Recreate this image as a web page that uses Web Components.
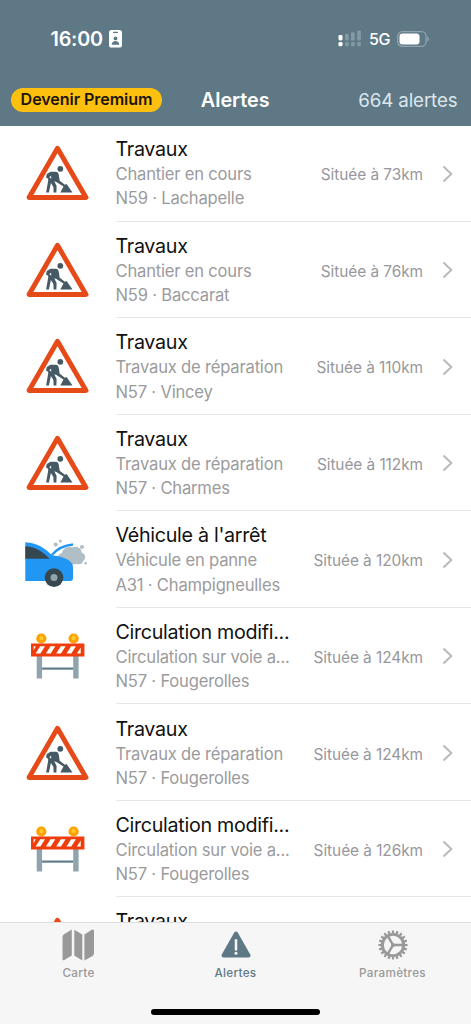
<!DOCTYPE html>
<html lang="fr">
<head>
<meta charset="utf-8">
<title>Alertes</title>
<style>
html,body{margin:0;height:100%;background:#fff;overflow:hidden}
body{font-family:Inter,"Liberation Sans",sans-serif}
</style>
</head>
<body>
<alert-app></alert-app>
<script>
const define=(name,html)=>customElements.define(name,class extends HTMLElement{
  constructor(){super();this.attachShadow({mode:'open'});}
  connectedCallback(){this.shadowRoot.innerHTML=typeof html==='function'?html(this):html;}
});

define('status-bar',`<style>
:host{display:flex;height:74px;box-sizing:border-box;padding:3px 41px 0 50.5px;align-items:center;color:#fff}
.time{font-weight:600;font-size:19.8px;letter-spacing:-.2px;width:52.5px;margin-right:5.5px;white-space:nowrap}
.net{font-weight:500;font-size:16px;letter-spacing:-.4px;margin:1px 7px 0 7px;white-space:nowrap}
.sp{flex:1}svg{display:block}
</style>
<span class="time">16:00</span>
<svg width="13" height="18" viewBox="0 0 13 18"><rect width="13" height="17.5" rx="2.6" fill="#fff"/><g fill="#5e7886"><rect x="4" y="1.7" width="5" height="1.3" rx=".6"/><circle cx="6.5" cy="8.4" r="1.9"/><path d="M2.7 14.8c0-5 7.6-5 7.6 0z"/></g></svg>
<span class="sp"></span>
<svg width="24" height="17" viewBox="0 0 24 17"><g fill="#fff"><rect x=".5" y="5" width="4" height="5.4" rx="1.3"/><rect x=".5" y="12" width="4" height="4.3" rx="1.3"/></g><g fill="#839aa5"><rect x="7" y="4" width="3.7" height="6.4" rx="1"/><rect x="13" y="2.3" width="3.7" height="8.1" rx="1"/><rect x="19.2" y=".4" width="3.7" height="10" rx="1"/><rect x="7" y="12" width="3.7" height="4.2" rx="1.2"/><rect x="13" y="12" width="3.7" height="4.2" rx="1.2"/><rect x="19.2" y="12" width="3.7" height="4.2" rx="1.2"/></g></svg>
<span class="net">5G</span>
<svg width="33" height="16" viewBox="0 0 33 16"><rect x=".7" y=".7" width="28.4" height="14.6" rx="4.6" fill="none" stroke="#91a4ae" stroke-width="1.3"/><rect x="2.5" y="2.5" width="20" height="11" rx="3" fill="#fff"/><path d="M30.4 5.5c2.2.8 2.2 4.2 0 5z" fill="#91a4ae"/></svg>`);

define('nav-bar',`<style>
:host{display:grid;grid-template-columns:1fr auto 1fr;height:52px;align-items:center;padding:0 13.5px 0 11px;box-sizing:border-box}
.pill{justify-self:start;width:151px;height:23.5px;border-radius:12px;background:#fec00f;color:#1c1608;font-weight:600;font-size:16.1px;letter-spacing:-.08px;line-height:23.5px;text-align:center;white-space:nowrap}
.title{color:#fff;font-weight:600;font-size:19.8px;letter-spacing:0;padding-left:2px}
.count{justify-self:end;color:#dde7ed;font-size:18.7px;letter-spacing:-.1px;white-space:nowrap}
</style><span class="pill">Devenir Premium</span><span class="title"><slot></slot></span><span class="count">664 alertes</span>`);

const art={
works:`<path d="M32.5 7.3 61 56.5H4Z" fill="#fff" stroke="#e64a19" stroke-width="4.9" stroke-linejoin="round"/>
<g fill="#455a64"><circle cx="35.3" cy="27.8" r="2.9"/><path d="M25.5 30.8h5.3c1.8 0 2.8 1.4 3 3.1l.9 5.8 5.2 4.1 1.7-.9 5.9 8.6H35.3l3.2-6-7.1-4.5-2.1-.8 2.3 4.9-.2 6.4h-2.8l-.2-5.4-2.5-4.2-2 9.6h-2.8l2.1-12.1-.1-1.6-2.1-1.4.8-3.5Z"/></g><path d="m24.4 36.3 1.8-1.8-.1 3.2Z" fill="#fff"/>`,
car:`<path d="M33 34c-2-4 1-7 4-8 1-5 6-7 10-5.5 5-2 10 1 9.5 5 4 1 5 6 1.8 8.2-1 4-5 4-7 3.3-5 1-14 2-18.3-3Z" fill="#b0bec5"/><g fill="#b0bec5"><circle cx="30.7" cy="17.6" r="2.1"/><circle cx="35.4" cy="14" r="1.5"/><circle cx="57" cy="20" r="2.1"/><circle cx="60.6" cy="36.3" r="1.3"/></g>
<path d="M.3 15.2C12 16 20 21 27 28.3c9 1.2 16.5 3.3 20 8.2.8 1.200 1 3 1 5V51.5q0 2.4-2.4 2.4H.3Z" fill="#2196f3"/><path d="M.3 19.3C11 20 18 25 24.5 31.7H.3Z" fill="#37474f"/><path d="M26.8 28C32 22 39 18.3 48 17.5" fill="none" stroke="#2196f3" stroke-width="2.3"/><circle cx="29" cy="50.6" r="9.3" fill="#37474f"/><circle cx="29" cy="50.6" r="3.5" fill="#90a4ae"/>`,
barrier:`<path d="M11.7 31h5.4v23.4h-5.4zM48.2 31h5.4v23.4h-5.4z" fill="#90a4ae"/><path d="M17.1 43.5h31.1v2.2H17.1z" fill="#607d8b"/>
<g fill="#ffa000"><circle cx="16.3" cy="14.5" r="5.1"/><circle cx="48.6" cy="14.5" r="5.1"/></g><g fill="#ffca28"><circle cx="16.3" cy="14" r="2.2"/><circle cx="48.6" cy="14" r="2.2"/></g>
<path d="M6 19.4h53.4v13H6z" fill="#f03d0c"/><path d="M8.6 22.200h2.200L8.600 26.200zM15.200 22.200h4.800l-4.600 7.300h-4.800zM25.500 22.200h4.800l-4.600 7.300h-4.800zM35.800 22.200h4.800l-4.600 7.300h-4.800zM46.100 22.200h4.800l-4.600 7.300h-4.800zM55.700 23.500v6h-3.800z" fill="#fff"/>`};
define('alert-icon',h=>`<style>:host{display:block;width:64px;height:64px}svg{display:block}</style><svg width="64" height="64" viewBox="0 0 64 64">${art[h.getAttribute('kind')]}</svg>`);

define('alert-row',h=>`<style>
:host{display:flex;height:96.55px;flex:none;align-items:center;box-sizing:border-box;padding-left:25px}
.body{margin-left:26.5px;flex:1;height:100%;box-sizing:border-box;border-bottom:1px solid #e7e7e9;display:flex;align-items:center;padding-right:18px;min-width:0}
.text{width:190px;flex:none;white-space:nowrap;color:#9b9b9d;font-size:16.6px;line-height:24.2px;letter-spacing:-.2px;padding-top:2.4px}
.t{color:#111;font-size:19.7px;line-height:25px;letter-spacing:-.3px}
.d{margin-left:auto;color:#97979c;font-size:15.4px;letter-spacing:-.05px;white-space:nowrap;padding-top:4px}
svg{margin:1.5px 0 0 19px;flex:none}
</style><alert-icon kind="${h.getAttribute('kind')}"></alert-icon>
<div class="body"><div class="text"><div class="t"><slot name="title"></slot></div><div><slot name="detail"></slot></div><div><slot name="place"></slot></div></div>
<span class="d"><slot name="distance"></slot></span>
<svg width="11" height="18" viewBox="0 0 11 18"><path d="m1.5 1.500 7.8 7.500-7.8 7.500" fill="none" stroke="#b9b9bc" stroke-width="2"/></svg></div>`);

const gear=(()=>{let s='';for(let i=0;i<20;i++)s+=`<path d="M-1.300-11.500-1-14.600H1L1.300-11.500Z" transform="rotate(${i*18})"/>`;return s})();
const tabs={
map:`<svg width="33" height="32" viewBox="0 0 33 32"><path d="M2 5.2 9.8.5v26L2.3 31Q.5 31.8.5 30V8q0-1.9 1.5-2.8ZM12.300.7l8 4.800v26l-8-5ZM22.400 5.500 29.800.8q2.200-1 2.200 1.200v22.300q0 1.700-1.400 2.600L22.400 31.500Z" fill="#999"/></svg>`,
warn:`<svg width="30" height="32" viewBox="0 0 30 32"><path d="M15 4.5 27.5 26.600H2.500Z" fill="#5e7886" stroke="#5e7886" stroke-width="4" stroke-linejoin="round"/><path d="M15 11.300v9.200" stroke="#f6f6f6" stroke-width="2.500" stroke-linecap="round"/><circle cx="15" cy="24.300" r="1.500" fill="#f6f6f6"/></svg>`,
gear:`<svg width="30" height="32" viewBox="-15 -16 30 32"><g fill="#999">${gear}</g><circle r="10.600" fill="none" stroke="#999" stroke-width="2.900"/><path d="M0 0H10M0 0-5-8.700M0 0-5 8.700" stroke="#999" stroke-width="2.500"/><circle r="2" fill="#999"/></svg>`};
define('tab-item',h=>`<style>:host{flex:1;display:flex;flex-direction:column;align-items:center;color:#999;font-size:11.7px;font-weight:500;letter-spacing:.3px;line-height:16px}:host([active]){color:#5e7886}svg{display:block;margin-bottom:4px}</style>${tabs[h.getAttribute('icon')]}<span><slot></slot></span>`);

define('tab-bar',`<style>
:host{display:flex;flex-direction:column;align-items:center;height:102px;box-sizing:border-box;background:#f6f6f6;border-top:1px solid #dedede;padding-top:6px}
nav{display:flex;width:100%;flex:1}.home{width:169px;height:6px;border-radius:3px;background:#000;margin-bottom:9.5px}
</style><nav><tab-item icon="map">Carte</tab-item><tab-item icon="warn" active>Alertes</tab-item><tab-item icon="gear">Paramètres</tab-item></nav><div class="home"></div>`);

const rows=[
['works','Travaux','Chantier en cours','N59 · Lachapelle','73'],
['works','Travaux','Chantier en cours','N59 · Baccarat','76'],
['works','Travaux','Travaux de réparation','N57 · Vincey','110'],
['works','Travaux','Travaux de réparation','N57 · Charmes','112'],
['car',"Véhicule à l'arrêt",'Véhicule en panne','A31 · Champigneulles','120'],
['barrier','Circulation modifi...','Circulation sur voie a...','N57 · Fougerolles','124'],
['works','Travaux','Travaux de réparation','N57 · Fougerolles','124'],
['barrier','Circulation modifi...','Circulation sur voie a...','N57 · Fougerolles','126']];
define('alert-app',()=>`<style>
:host{display:flex;flex-direction:column;height:1024px;width:471px;background:#fff}
header{background:#5e7886;flex:none;height:126px}
main{flex:1;min-height:0;overflow:hidden;display:flex;flex-direction:column}
alert-row:first-child{margin-top:-1px}tab-bar{flex:none}
.peek{display:flex;height:97px;flex:none;align-items:flex-start;padding-left:25px}
.peek alert-icon{margin-top:16px}.peek span{margin-left:26.5px;padding-top:12px;font-size:19.7px;line-height:25px;letter-spacing:-.3px;color:#111}
</style><header><status-bar></status-bar><nav-bar>Alertes</nav-bar></header>
<main>${rows.map(r=>`<alert-row kind="${r[0]}"><span slot="title">${r[1]}</span><span slot="detail">${r[2]}</span><span slot="place">${r[3]}</span><span slot="distance">Située à ${r[4]}km</span></alert-row>`).join('')}<div class="peek"><alert-icon kind="works"></alert-icon><span>Travaux</span></div></main><tab-bar></tab-bar>`);
</script>
</body>
</html>
